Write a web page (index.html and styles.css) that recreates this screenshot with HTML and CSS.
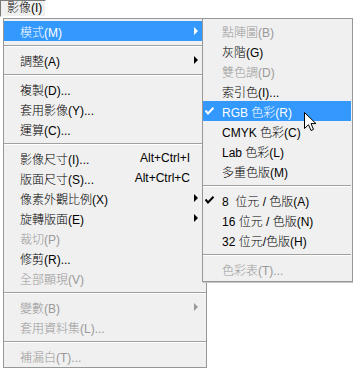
FILE: index.html
```html
<!DOCTYPE html>
<html lang="zh-Hant">
<head>
    <meta charset="UTF-8">
    <title>影像</title>
    <link rel="stylesheet" href="styles.css">
</head>
<body>
    <div class="menubar">
        <span class="menubar_item">影像(I)</span>
    </div>

    <div class="dropdown">
        <div class="menu main_menu">
            <div class="row active"><span class="label">模式(M)</span><span class="arrow"></span></div>
            <div class="sep"></div>
            <div class="row"><span class="label">調整(A)</span><span class="arrow"></span></div>
            <div class="sep"></div>
            <div class="row"><span class="label">複製(D)...</span></div>
            <div class="row"><span class="label">套用影像(Y)...</span></div>
            <div class="row"><span class="label">運算(C)...</span></div>
            <div class="sep"></div>
            <div class="row"><span class="label">影像尺寸(I)...</span><span class="shortcut">Alt+Ctrl+I</span></div>
            <div class="row"><span class="label">版面尺寸(S)...</span><span class="shortcut">Alt+Ctrl+C</span></div>
            <div class="row"><span class="label">像素外觀比例(X)</span><span class="arrow"></span></div>
            <div class="row"><span class="label">旋轉版面(E)</span><span class="arrow"></span></div>
            <div class="row disabled"><span class="label">裁切(P)</span></div>
            <div class="row"><span class="label">修剪(R)...</span></div>
            <div class="row disabled"><span class="label">全部顯現(V)</span></div>
            <div class="sep"></div>
            <div class="row disabled"><span class="label">變數(B)</span><span class="arrow"></span></div>
            <div class="row disabled"><span class="label">套用資料集(L)...</span></div>
            <div class="sep"></div>
            <div class="row disabled"><span class="label">補漏白(T)...</span></div>
        </div>

        <div class="menu sub_menu">
            <div class="row disabled"><span class="check"></span><span class="label">點陣圖(B)</span></div>
            <div class="row"><span class="check"></span><span class="label">灰階(G)</span></div>
            <div class="row disabled"><span class="check"></span><span class="label">雙色調(D)</span></div>
            <div class="row"><span class="check"></span><span class="label">索引色(I)...</span></div>
            <div class="row active">
                <span class="check"><svg width="9" height="8" viewBox="0 0 9 8"><path d="M0.5 3.5 L3 6.5 L8.5 0.8" fill="none" stroke="#fff" stroke-width="2"/></svg></span>
                <span class="label">RGB 色彩(R)</span>
            </div>
            <div class="row"><span class="check"></span><span class="label">CMYK 色彩(C)</span></div>
            <div class="row"><span class="check"></span><span class="label">Lab 色彩(L)</span></div>
            <div class="row"><span class="check"></span><span class="label">多重色版(M)</span></div>
            <div class="sep"></div>
            <div class="row">
                <span class="check"><svg width="9" height="8" viewBox="0 0 9 8"><path d="M0.5 3.5 L3 6.5 L8.5 0.8" fill="none" stroke="#000" stroke-width="2"/></svg></span>
                <span class="label">8&nbsp; 位元 / 色版(A)</span>
            </div>
            <div class="row"><span class="check"></span><span class="label">16 位元 / 色版(N)</span></div>
            <div class="row"><span class="check"></span><span class="label">32 位元/色版(H)</span></div>
            <div class="sep"></div>
            <div class="row disabled"><span class="check"></span><span class="label">色彩表(T)...</span></div>
        </div>

        <!-- mouse pointer over RGB -->
        <svg class="cursor" width="13" height="20" viewBox="0 0 13 20">
            <path d="M0.5 0.5 L0.5 16.5 L4.5 12.7 L7 18.5 L9.5 17.4 L7 11.6 L12 11.6 Z" fill="#fff" stroke="#000" stroke-width="1" stroke-linejoin="miter"/>
        </svg>
    </div>
</body>
</html>
```

FILE: styles.css
```css
body{
    margin:0;
    background:#fff;
    font-family:"Liberation Sans","Noto Sans CJK TC",sans-serif;
    font-size:12px;
    font-weight:300;
    color:#000;
}
.menubar{
    height:18px;
}
.menubar_item{
    display:inline-block;
    box-sizing:border-box;
    height:17px;
    padding:0 3px 0 6px;
    line-height:15px;
    background:#f0f0f0;
    border-top:1px solid #7a7a7a;
    border-left:1px solid #7a7a7a;
    border-right:1px solid #fff;
    border-bottom:1px solid #fff;
}
.dropdown{
    position:relative;
    margin-left:3px;
}
.menu{
    box-sizing:border-box;
    background:#f0f0f0;
    border:1px solid #979797;
    padding:2px 0 1px 0;
}
.main_menu{
    width:204px;
}
.sub_menu{
    position:absolute;
    left:199px;
    top:0;
    width:151px;
    padding:2px 1px 2px 0;
    box-shadow:1px 1px 0 #c4c4c4;
}
.row{
    display:flex;
    align-items:center;
    height:20px;
    padding-left:16px;
    white-space:nowrap;
}
.sub_menu .row{
    padding-left:2px;
}
.row.active{
    background:#3399ff;
    color:#fff;
}
.row.disabled{
    color:#999;
}
.check{
    display:flex;
    align-items:center;
    width:17px;
    height:20px;
}
.shortcut{
    margin-left:auto;
    margin-right:16px;
}
.arrow{
    margin-left:auto;
    margin-right:8px;
    width:0;
    height:0;
    border-left:4px solid #000;
    border-top:4px solid transparent;
    border-bottom:4px solid transparent;
}
.active .arrow{
    border-left-color:#fff;
}
.disabled .arrow{
    border-left-color:#999;
}
.sep{
    height:0;
    margin:4px 0 3px;
    border-top:1px solid #a0a0a0;
    border-bottom:1px solid #fff;
}
.cursor{
    position:absolute;
    left:301px;
    top:94px;
}
```
